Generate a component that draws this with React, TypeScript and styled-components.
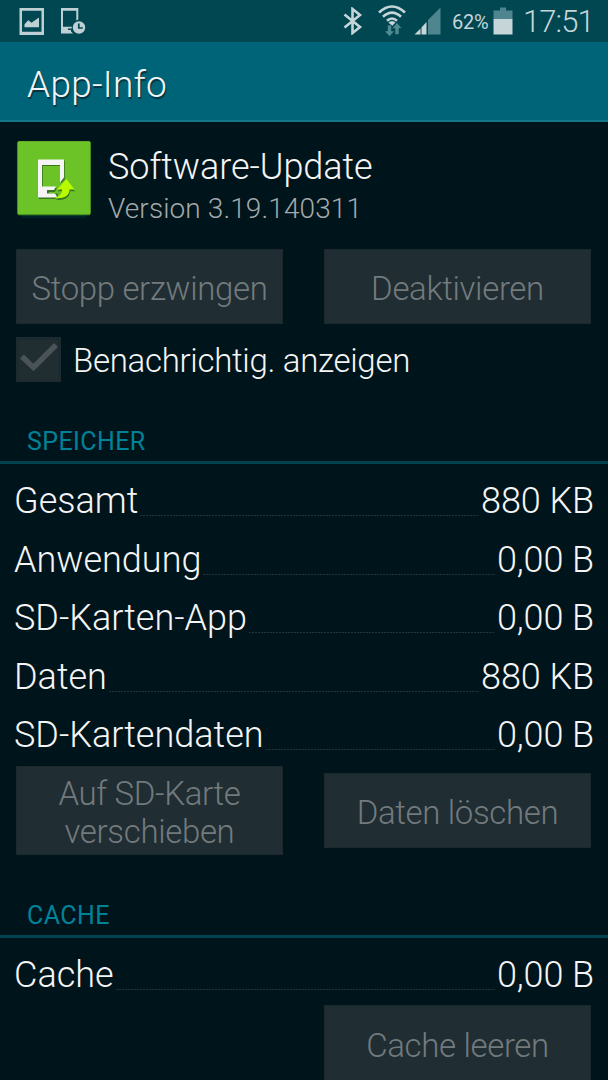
import React from 'react';
import styled, { createGlobalStyle } from 'styled-components';

const Global = createGlobalStyle`
  * { box-sizing: border-box; }
  body { margin: 0; background: #00141b; }
`;

const Screen = styled.div`
  width: 608px;
  height: 1080px;
  overflow: hidden;
  display: flex;
  flex-direction: column;
  background: #00141b;
  color: #f5f5f5;
  font-family: Roboto, sans-serif;
  font-weight: 300;
  white-space: nowrap;
`;

const StatusBar = styled.div`
  height: 42px;
  flex: none;
  display: flex;
  align-items: center;
  justify-content: space-between;
  padding: 0 14px 0 18px;
  background: #004752;
  color: #c5d5d8;
`;

const StatusGroup = styled.div`
  display: flex;
  align-items: center;
  height: 42px;
`;

const Percent = styled.span`
  margin-left: 10px;
  width: 37px;
  padding-top: 1px;
  font-size: 20px;
  line-height: 24px;
  font-weight: 400;
  letter-spacing: -0.2px;
`;

const Clock = styled.span`
  margin-left: 10px;
  width: 71px;
  padding-top: 1px;
  font-size: 31px;
  line-height: 36px;
  letter-spacing: -0.9px;
`;

const Header = styled.header`
  height: 80px;
  flex: none;
  padding: 0 27px;
  display: flex;
  align-items: center;
  background: #006478;
  border-bottom: 2px solid #147889;
  text-shadow: 1px 2px 1px rgba(0, 30, 40, 0.7);
`;

const Fitted = styled.span<{ $ls?: number }>`
  letter-spacing: ${(p) => p.$ls ?? 0}px;
`;

const Title = styled(Fitted)`
  font-size: 37px;
  line-height: 44px;
  padding-top: 7px;
`;

const AppHeader = styled.section`
  height: 126px;
  flex: none;
  display: flex;
  align-items: flex-start;
  padding: 19px 16px 0 17px;
`;

const AppText = styled.div`
  display: flex;
  flex-direction: column;
  margin-left: 17px;
  padding-top: 5px;
`;

const AppName = styled(Fitted)`
  font-size: 36px;
  line-height: 42px;
`;

const Version = styled(Fitted)`
  font-size: 28px;
  line-height: 34px;
  margin-top: 4px;
  color: #a3a9aa;
`;

const ButtonRow = styled.div<{ $height: number; $end?: boolean }>`
  height: ${(p) => p.$height}px;
  flex: none;
  display: flex;
  align-items: center;
  justify-content: ${(p) => (p.$end ? 'flex-end' : 'space-between')};
  padding: 0 17px 0 16px;
`;

const ActionButton = styled.button<{ $height?: number }>`
  width: 267px;
  height: ${(p) => p.$height ?? 75}px;
  padding: 4px 0 0;
  border: 1px solid #1b282c;
  background: #202d32;
  color: #727a7d;
  font: 300 33px/38px Roboto, sans-serif;
  letter-spacing: -0.35px;
  text-align: center;
`;

const CheckRow = styled.label`
  height: 69px;
  flex: none;
  display: flex;
  align-items: center;
  padding: 0 16px;
  gap: 12px;
  font-size: 33px;
  line-height: 40px;
`;

const CheckLabel = styled(Fitted)`
  padding-top: 2px;
`;

const SectionTitle = styled.h2<{ $height: number; $ls?: number }>`
  height: ${(p) => p.$height}px;
  flex: none;
  margin: 0;
  padding: 0 27px 4px;
  display: flex;
  align-items: flex-end;
  border-bottom: 3px solid #00434f;
  color: #008299;
  font-size: 25px;
  line-height: 30px;
  font-weight: 400;
  letter-spacing: ${(p) => p.$ls ?? 0}px;
`;

const List = styled.div<{ $bottom: number }>`
  flex: none;
  padding: 7px 14px ${(p) => p.$bottom}px;
`;

const Row = styled.div`
  height: 58.5px;
  display: flex;
  align-items: flex-start;
  font-size: 36px;
  line-height: 60px;
`;

const Leader = styled.i`
  flex: 1;
  margin: 44px 2px 0;
  height: 1px;
  background: repeating-linear-gradient(90deg, #213238 0 2px, #06191f 2px 3px);
`;

const PictureIcon = () => (
  <svg width="26" height="28" viewBox="0 0 26 28">
    <path fill="#bfd0d4" fillRule="evenodd" d="M1.500 1h25v27h-25zM4 3.800v21h19.500v-21z" />
    <path fill="#bfd0d4" d="M6.500 20.300v-3l3.800-4 3.200 2.400 7.500-5.200v9.800z" />
  </svg>
);

const DeviceClockIcon = () => (
  <svg width="26" height="28" viewBox="0 0 26 28" style={{ marginLeft: 16 }}>
    <path fill="#bfd0d4" fillRule="evenodd" d="M1 1h17.300v11.500l-2 1V3.800H3v16h9l-.5 1.700H8v1.500h3v1.500l2 2H1z" />
    <circle cx="19" cy="20.500" r="6.200" fill="#bfd0d4" />
    <path d="M18.800 16.500v4.500h4" fill="none" stroke="#004752" strokeWidth="1.700" />
  </svg>
);

const BluetoothIcon = () => (
  <svg width="20" height="28" viewBox="0 0 20 28">
    <path d="M1.500 7.500L17 20l-7.500 6V2L17 8 1.500 20.500" fill="none" stroke="#c5d5d8" strokeWidth="2.600" />
  </svg>
);

const WifiIcon = () => (
  <svg width="28" height="32" viewBox="0 0 28 32" style={{ marginLeft: 15 }}>
    <g fill="none" stroke="#c5d5d8" strokeWidth="2.600">
      <path d="M1 7.500Q14-4.500 27 7.500" />
      <path d="M5 11.800Q14 3.500 23 11.800" />
      <path d="M9 15.800Q14 11.200 19 15.800" />
    </g>
    <path d="M10.500 17.500Q14 14.500 17.500 17.500L14 21z" fill="#c5d5d8" />
    <path d="M9.500 20h4v6h3l-5 5.500-5-5.500h3z" fill="#528a93" stroke="#004752" strokeWidth=".6" />
    <path d="M17 29.500h4v-6h3L19 17.500l-5 6h3z" fill="#528a93" stroke="#004752" strokeWidth=".6" />
  </svg>
);

const SignalIcon = () => (
  <svg width="28" height="28" viewBox="0 0 28 28" style={{ marginLeft: 8 }}>
    <path d="M0.500 27.500l6-6v6z M7.500 27.500v-7l5-5.500v12.500z" fill="#c5d5d8" />
    <path d="M14 27.500V13L26.500 .5v27z" fill="#4e858e" />
  </svg>
);

const BatteryIcon = () => (
  <svg width="20" height="28" viewBox="0 0 20 28" style={{ marginLeft: 4 }}>
    <path d="M.5 3.500H7V.5h6v3h6.500V12H.5z" fill="#4e858e" />
    <path d="M.5 12h19v15.500H.5z" fill="#c5d5d8" />
  </svg>
);

const UpdateIcon = () => (
  <svg width="74" height="80" viewBox="0 0 74 80">
    <rect x="5" y="73" width="64" height="4" fill="#00232b" />
    <rect x=".5" y=".3" width="73" height="74" rx="1.500" fill="#4a951f" />
    <rect x=".5" y=".3" width="73" height="72.700" rx="1.500" fill="#6cc327" />
    <path d="M21 18.500h26v19l-4 4V24H25v22h14l-2 4h-6v1.500h9v3l-3 2.500H21z" fill="#39751c" transform="translate(.8 1)" />
    <path fillRule="evenodd" d="M21 18.500h26v18l-4 5V24H25v21.500h14l-2 3.500h-7v3.500h8l2 3-2 1H21z" fill="#f5f5f5" />
    <path d="M49.500 38.500l8 10.500h-5c0 6-5 9.700-15 8.300 5-1 7.500-4 7.500-8.300h-5z" fill="#39751c" transform="translate(.5 1.300)" />
    <path d="M49.500 38l8 10.500h-5c0 6-5 9.700-15 8.300 5-1 7.500-4 7.500-8.300h-5z" fill="#b9fa00" />
  </svg>
);

const CheckBox = () => (
  <svg width="45" height="45" viewBox="0 0 45 45">
    <rect width="45" height="45" fill="#1d2a2f" />
    <rect x="3" y="3" width="39" height="39" fill="#202d31" />
    <path d="M6 19.500L17.500 30.500 40 8" fill="none" stroke="#4a5458" strokeWidth="5.500" />
  </svg>
);

const storage = [
  { label: 'Gesamt', value: '880 KB' },
  { label: 'Anwendung', value: '0,00 B' },
  { label: 'SD-Karten-App', value: '0,00 B' },
  { label: 'Daten', value: '880 KB' },
  { label: 'SD-Kartendaten', value: '0,00 B' },
];

const SizeRow = ({ label, value }: { label: string; value: string }) => (
  <Row>
    <Fitted>{label}</Fitted>
    <Leader />
    <Fitted $ls={-0.1}>{value}</Fitted>
  </Row>
);

export default function App() {
  return (
    <Screen>
      <Global />
      <StatusBar>
        <StatusGroup>
          <PictureIcon />
          <DeviceClockIcon />
        </StatusGroup>
        <StatusGroup>
          <BluetoothIcon />
          <WifiIcon />
          <SignalIcon />
          <Percent>62%</Percent>
          <BatteryIcon />
          <Clock>17:51</Clock>
        </StatusGroup>
      </StatusBar>
      <Header>
        <Title $ls={0.25}>App-Info</Title>
      </Header>
      <AppHeader>
        <UpdateIcon />
        <AppText>
          <AppName $ls={-0.05}>Software-Update</AppName>
          <Version $ls={0.1}>Version 3.19.140311</Version>
        </AppText>
      </AppHeader>
      <ButtonRow $height={77}>
        <ActionButton>Stopp erzwingen</ActionButton>
        <ActionButton>Deaktivieren</ActionButton>
      </ButtonRow>
      <CheckRow>
        <CheckBox />
        <CheckLabel $ls={-0.3}>Benachrichtig. anzeigen</CheckLabel>
      </CheckRow>
      <SectionTitle $height={70} $ls={0.4}>SPEICHER</SectionTitle>
      <List $bottom={2}>
        {storage.map((r) => (
          <SizeRow key={r.label} {...r} />
        ))}
      </List>
      <ButtonRow $height={90}>
        <ActionButton $height={89}>
          Auf SD-Karte
          <br />
          verschieben
        </ActionButton>
        <ActionButton>Daten löschen</ActionButton>
      </ButtonRow>
      <SectionTitle $height={82} $ls={0.4}>CACHE</SectionTitle>
      <List $bottom={2}>
        <SizeRow label="Cache" value="0,00 B" />
      </List>
      <ButtonRow $height={77} $end>
        <ActionButton $height={77}>Cache leeren</ActionButton>
      </ButtonRow>
    </Screen>
  );
}
